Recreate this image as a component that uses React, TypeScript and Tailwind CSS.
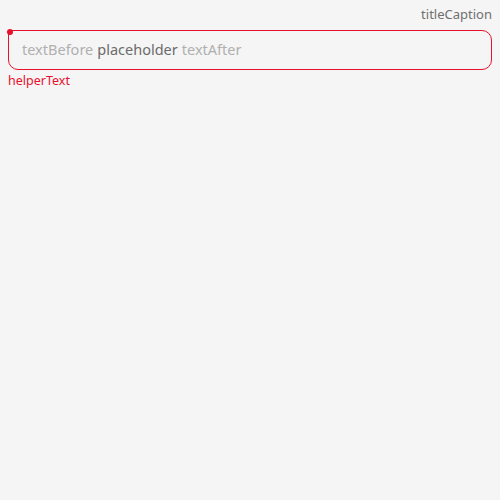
export default function App() {
  return (
    <div className="min-h-[500px] w-[500px] bg-[#f5f5f5] px-2 pt-[5px] font-['Noto_Sans',sans-serif]">
      <div className="flex justify-end text-[13px] leading-[18px] text-[#707070]">titleCaption</div>
      <div className="relative mt-[7px] flex h-[40px] items-center rounded-[10px] rounded-tl-[2px] border border-[#e8112d] px-[13px] pb-[1px] text-[14.5px]">
        <span className="absolute left-[-2px] top-[-2px] h-[6px] w-[6px] rounded-full bg-[#e8112d]" />
        <span className="text-[#b0b0b0]">textBefore</span>
        <span className="ml-[4px] text-[#6b6b6b]">placeholder</span>
        <span className="ml-[4px] text-[#b0b0b0]">textAfter</span>
      </div>
      <div className="mt-[2px] text-[12.5px] leading-[18px] text-[#e8112d]">helperText</div>
    </div>
  )
}
